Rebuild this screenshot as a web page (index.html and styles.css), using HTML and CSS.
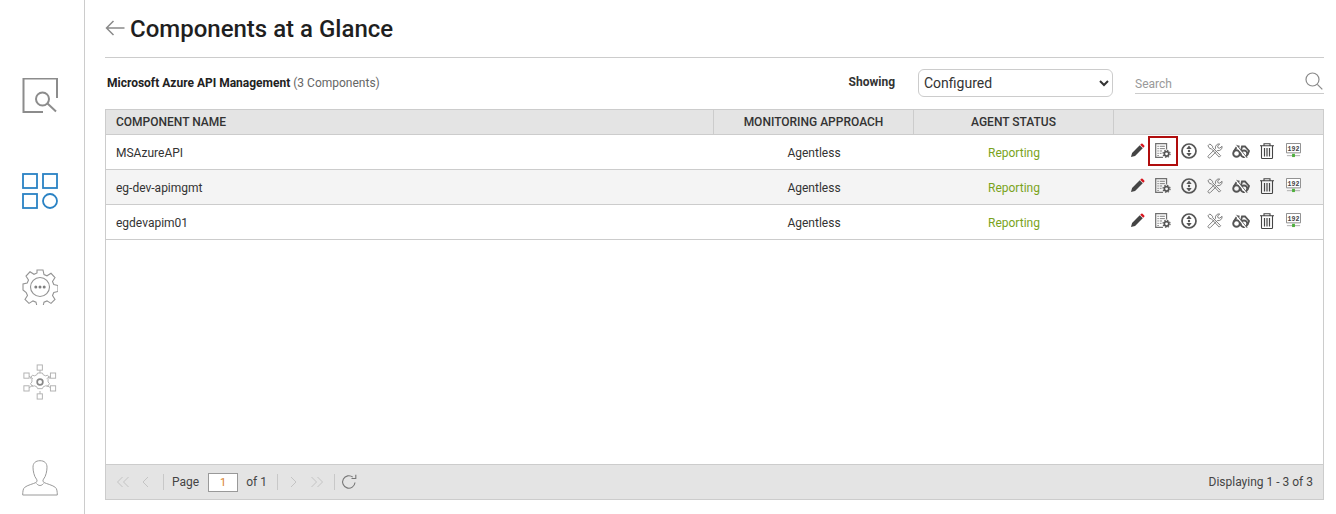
FILE: index.html
```html
<!DOCTYPE html>
<html lang="en">
<head>
<meta charset="utf-8">
<title>Components at a Glance</title>
<link rel="stylesheet" href="styles.css">
</head>
<body>
<svg class="sprite" aria-hidden="true">
  <symbol id="i-edit" viewBox="0 0 16 16">
    <path d="M1 15l1.200-4.400L10.400 2.400l3.200 3.200-8.200 8.200z" fill="#444"/>
    <path d="M10.900 1.900l1.100-1.100a1 1 0 0 1 1.400 0l1.800 1.800a1 1 0 0 1 0 1.400l-1.100 1.100z" fill="#d8161f"/>
  </symbol>
  <symbol id="i-config" viewBox="0 0 17 16">
    <path d="M8.500 15.300H.7V.7h11.600v6.300" fill="none" stroke="#707070" stroke-width="1.300"/>
    <path d="M2.500 3.500h1.500M5 3.500h5.500M2.500 6h1.500M5 6h5.500M2.500 8.500h1.500M5 8.500h2.500M2.500 11h1.500M5 11h2M2.500 13.300h1.500" stroke="#777" stroke-width="1"/>
    <circle cx="12.300" cy="11.500" r="2.400" fill="none" stroke="#555" stroke-width="1.800"/>
    <circle cx="12.300" cy="11.500" r="3.800" fill="none" stroke="#555" stroke-width="1.200" stroke-dasharray="1.500 1.500"/>
  </symbol>
  <symbol id="i-approach" viewBox="0 0 16 16">
    <circle cx="8" cy="8" r="7" fill="none" stroke="#555" stroke-width="1.700"/>
    <path d="M8 2.500L5.300 6h5.400zM8 13.500L5.300 10h5.400z" fill="#555"/>
    <circle cx="8" cy="8" r="1.200" fill="#555"/>
  </symbol>
  <symbol id="i-tools" viewBox="0 0 17 17">
    <path d="M1 3l2-2 3 2.500v1.500l8.500 8.500-1.500 1.500L4.500 6H3z" fill="none" stroke="#777" stroke-width="1"/>
    <path d="M16 3.500l-2.500 2-1.800-.4-.4-1.800L13.500 1a4 4 0 0 0-4.500 5L1.500 13.500a1.400 1.400 0 0 0 2 2L11 8a4 4 0 0 0 5-4.500z" fill="none" stroke="#777" stroke-width="1"/>
  </symbol>
  <symbol id="i-binoculars" viewBox="0 0 18 14">
    <circle cx="4.500" cy="9.500" r="3.300" fill="none" stroke="#555" stroke-width="1.900"/>
    <circle cx="12" cy="9.800" r="3.300" fill="none" stroke="#555" stroke-width="1.900"/>
    <path d="M1.500 8L5 2.500h2.500M9 7l1-4.500h3l4 4.500-1.500 4" fill="none" stroke="#555" stroke-width="1.800"/>
    <path d="M3 .3l11 13.400" stroke="#fff" stroke-width="1.400"/>
    <path d="M4.500.8l11 13.400" stroke="#555" stroke-width=".8"/>
  </symbol>
  <symbol id="i-trash" viewBox="0 0 14 16">
    <path d="M0 2.700h14M4 2.500V.7h6v1.800" fill="none" stroke="#444" stroke-width="1.100"/>
    <path d="M1.500 2.700v12a.8.800 0 0 0 .8.800h9.400a.8.800 0 0 0 .8-.8v-12" fill="none" stroke="#444" stroke-width="1.100"/>
    <path d="M4.500 5v8.500M7 5v8.500M9.500 5v8.500" stroke="#444" stroke-width="1.200"/>
  </symbol>
  <symbol id="i-ip" viewBox="0 0 16 16">
    <path d="M.5.500h15v10H.5z" fill="#fff" stroke="#888" stroke-width="1"/>
    <text x="8" y="8.300" text-anchor="middle" class="ip-text">192</text>
    <path d="M1 13.500h14" stroke="#aaa" stroke-width="1"/>
    <path d="M6.500 11.500h3v3.500h-3z" fill="#4caf3a"/>
  </symbol>
</svg>

<div class="app">
  <nav class="rail">
    <div class="rail-item">
      <svg class="rail-icon" viewBox="0 1 36 36"><path d="M35 21V1.500H1.500V35H21" fill="none" stroke="#8c8c8c" stroke-width="2"/><circle cx="20.500" cy="22" r="6.500" fill="none" stroke="#8c8c8c" stroke-width="2"/><path d="M25.500 26.500l8.500 8" stroke="#8c8c8c" stroke-width="2"/></svg>
    </div>
    <div class="rail-item">
      <svg class="rail-icon" viewBox="0 0 36 36"><g fill="none" stroke="#2a82c4" stroke-width="1.800"><rect x="1" y="1" width="14" height="14"/><rect x="21" y="1" width="14" height="14"/><rect x="1" y="21" width="14" height="14"/><circle cx="28" cy="28" r="7"/></g></svg>
    </div>
    <div class="rail-item">
      <svg class="rail-icon" viewBox="0 0 36 36"><path d="M15 1h6l1 4.500 3 1.300 4-2.500 4 4.300-2.500 3.900 1.300 3 4.200 1v6l-4.200 1-1.300 3 2.500 3.900-4 4-4-2.500-3 1.300-1 4.300h-6l-1-4.300-3-1.300-4 2.500-4-4 2.500-3.900-1.300-3L1 21v-6l4.200-1 1.300-3L4 7.100l4-4.300 4 2.500 3-1.300z" fill="none" stroke="#949494" stroke-width="1.100"/><circle cx="18" cy="18" r="9.500" fill="none" stroke="#949494" stroke-width="1.100"/><circle cx="13.800" cy="18" r="1.500" fill="#808080"/><circle cx="18" cy="18" r="1.500" fill="#808080"/><circle cx="22.200" cy="18" r="1.500" fill="#808080"/></svg>
    </div>
    <div class="rail-item">
      <svg class="rail-icon" viewBox="0 0 36 38"><g fill="none" stroke="#b0b0b0" stroke-width="1"><rect x="15" y="1" width="5.500" height="5.500"/><rect x="15" y="31.500" width="5.500" height="5.500"/><rect x="1" y="9.500" width="5.500" height="5.500"/><rect x="29" y="9.500" width="5.500" height="5.500"/><rect x="1" y="23" width="5.500" height="5.500"/><rect x="29" y="23" width="5.500" height="5.500"/><path d="M18 6.500v3M18 28.500v3M6.500 13l4 2.500M29 13l-4 2.500M6.500 25l4-2.500M29 25l-4-2.500"/><path d="M15.500 9.500h5l1 2 2.500 1 2-.7 2 3-1.500 1.700v2.500l1.500 1.700-2 3-2-.7-2.500 1-1 2h-5l-1-2-2.500-1-2 .7-2-3 1.500-1.700V16.500L8 14.800l2-3 2 .7 2.500-1z"/></g><circle cx="18" cy="19" r="3" fill="none" stroke="#888" stroke-width="1.800"/></svg>
    </div>
    <div class="rail-item">
      <svg class="rail-icon" viewBox="0 0 36 36"><path d="M18 .7c-4.500 0-7 2.500-7 6.500 0 3.500 1 9 3.500 12 .8 1 .8 2.500-.5 3.300-3 1.500-8.500 2.500-11.500 5C1.300 28.500.7 31 .7 35h34.600c0-4-.6-6.500-1.800-7.500-3-2.500-8.500-3.500-11.500-5-1.300-.8-1.300-2.300-.5-3.300 2.500-3 3.500-8.500 3.500-12 0-4-2.500-6.500-7-6.500z" fill="none" stroke="#9a9a9a" stroke-width="1"/><path d="M14.500 23.500c1 1.300 2.300 2 3.500 2s2.500-.7 3.500-2" fill="none" stroke="#9a9a9a" stroke-width="1"/></svg>
    </div>
  </nav>

  <main class="content">
    <header class="page-head">
      <svg class="back" viewBox="0 0 20 16"><path d="M19.500 8H1.500M8.500 1L1.500 8l7 7" fill="none" stroke="#8a8a8a" stroke-width="1.500"/></svg>
      <h1 class="title">Components at a Glance</h1>
    </header>

    <div class="toolbar">
      <div class="summary"><strong>Microsoft Azure API Management</strong> <span class="count">(3 Components)</span></div>
      <label class="showing" for="showing">Showing</label>
      <select class="select" id="showing"><option>Configured</option></select>
      <div class="search">
        <input class="search-input" type="text" placeholder="Search">
        <svg class="search-icon" viewBox="0 0 18 18"><circle cx="7.500" cy="7.500" r="6.500" fill="none" stroke="#8a8a8a" stroke-width="1.200"/><path d="M12.300 12.300l5 5" stroke="#8a8a8a" stroke-width="1.200"/></svg>
      </div>
    </div>

    <section class="grid">
      <div class="row head">
        <div class="cell name">COMPONENT NAME</div>
        <div class="cell center">MONITORING APPROACH</div>
        <div class="cell center">AGENT STATUS</div>
        <div class="cell"></div>
      </div>

      <div class="rows">
        <div class="row item">
          <div class="cell name">MSAzureAPI</div>
          <div class="cell center">Agentless</div>
          <div class="cell center ok">Reporting</div>
          <div class="cell actions">
            <svg class="ic ic-edit"><use href="#i-edit"/></svg>
            <span class="ic-box selected"><svg class="ic ic-config"><use href="#i-config"/></svg></span>
            <svg class="ic"><use href="#i-approach"/></svg>
            <svg class="ic"><use href="#i-tools"/></svg>
            <svg class="ic ic-wide"><use href="#i-binoculars"/></svg>
            <svg class="ic ic-trash"><use href="#i-trash"/></svg>
            <svg class="ic ic-ip"><use href="#i-ip"/></svg>
          </div>
        </div>
        <div class="row item alt">
          <div class="cell name">eg-dev-apimgmt</div>
          <div class="cell center">Agentless</div>
          <div class="cell center ok">Reporting</div>
          <div class="cell actions">
            <svg class="ic ic-edit"><use href="#i-edit"/></svg>
            <span class="ic-box"><svg class="ic ic-config"><use href="#i-config"/></svg></span>
            <svg class="ic"><use href="#i-approach"/></svg>
            <svg class="ic"><use href="#i-tools"/></svg>
            <svg class="ic ic-wide"><use href="#i-binoculars"/></svg>
            <svg class="ic ic-trash"><use href="#i-trash"/></svg>
            <svg class="ic ic-ip"><use href="#i-ip"/></svg>
          </div>
        </div>
        <div class="row item">
          <div class="cell name">egdevapim01</div>
          <div class="cell center">Agentless</div>
          <div class="cell center ok">Reporting</div>
          <div class="cell actions">
            <svg class="ic ic-edit"><use href="#i-edit"/></svg>
            <span class="ic-box"><svg class="ic ic-config"><use href="#i-config"/></svg></span>
            <svg class="ic"><use href="#i-approach"/></svg>
            <svg class="ic"><use href="#i-tools"/></svg>
            <svg class="ic ic-wide"><use href="#i-binoculars"/></svg>
            <svg class="ic ic-trash"><use href="#i-trash"/></svg>
            <svg class="ic ic-ip"><use href="#i-ip"/></svg>
          </div>
        </div>
      </div>

      <footer class="pager">
        <svg class="pg" viewBox="0 0 14 14"><path d="M6.500 2L1.500 7l5 5M12.500 2l-5 5 5 5" class="pg-line"/></svg>
        <svg class="pg pg-prev" viewBox="0 0 14 14"><path d="M9 2L4 7l5 5" class="pg-line"/></svg>
        <span class="sep"></span>
        <span>Page</span>
        <span class="page-box">1</span>
        <span>of 1</span>
        <span class="sep"></span>
        <svg class="pg" viewBox="0 0 14 14"><path d="M5 2l5 5-5 5" class="pg-line"/></svg>
        <svg class="pg pg-last" viewBox="0 0 14 14"><path d="M1.500 2l5 5-5 5M7.500 2l5 5-5 5" class="pg-line"/></svg>
        <span class="sep sep-end"></span>
        <svg class="refresh" viewBox="0 0 16 16"><path d="M14 8.500A6.200 6.200 0 1 1 11.800 3.200" fill="none" stroke="#777" stroke-width="1.100"/><path d="M10.500 4.500h4.300V.8" fill="none" stroke="#777" stroke-width="1.100"/></svg>
        <span class="display">Displaying 1 - 3 of 3</span>
      </footer>
    </section>
  </main>
</div>
</body>
</html>
```

FILE: styles.css
```css
*, *::after { box-sizing: border-box; }
html, body { margin: 0; padding: 0; background: #fff; }
body { font-family: Roboto, "Liberation Sans", sans-serif; font-size: 12px; color: #333; }
.sprite { display: none; }
.ip-text { font: 700 7px "Liberation Mono", monospace; fill: #444; }

.app { display: flex; height: 514px; overflow: hidden; }

.rail { width: 85px; flex: none; border-right: 1px solid #ccc; padding-top: 48px; display: flex; flex-direction: column; }
.rail-item { height: 95.500px; display: flex; align-items: center; justify-content: center; padding-right: 5px; flex: none; }
.rail-icon { width: 36px; height: 36px; display: block; }

.content { flex: 1; min-width: 0; padding: 0 12px 14px 20px; display: flex; flex-direction: column; }

.page-head { height: 58px; flex: none; border-bottom: 1px solid #ccc; display: flex; align-items: center; padding-top: 1px; }
.back { width: 20px; height: 16px; margin: 0 5px 2px 0; flex: none; }
.title { margin: 0; font-size: 24px; font-weight: 500; color: #1f1f1f; line-height: 30px; }

.toolbar { height: 51px; flex: none; display: flex; align-items: center; padding: 0 0 2px 2px; }
.summary { flex: 1; font-size: 12px; color: #222; }
.summary strong { font-weight: 700; }
.count { color: #666; }
.showing { font-weight: 700; color: #333; margin: 0 23px 2px 0; }
.select { width: 195px; height: 28px; border: 1px solid #ccc; border-radius: 6px; background: #fff; padding: 0 1px; font: 14px Roboto, sans-serif; color: #333; margin-right: 22px; }
.search { width: 189px; height: 22px; border-bottom: 1px solid #ccc; display: flex; align-items: center; justify-content: space-between; padding-right: 1px; }
.search-input { border: 0; outline: 0; padding: 0; flex: 1; min-width: 0; height: 18px; margin-top: 4px; font: 12px Roboto, sans-serif; background: transparent; }
.search-input::placeholder { color: #999; }
.search-icon { width: 18px; height: 18px; margin-top: -3px; flex: none; }

.grid { flex: 1; min-height: 0; border: 1px solid #ccc; display: flex; flex-direction: column; }
.row { display: grid; grid-template-columns: 608px 200px 200px 1fr; }
.head { height: 25px; flex: none; background: #e4e4e4; border-bottom: 1px solid #ccc; font-weight: 500; color: #333; }
.head .cell { border-right: 1px solid #ccc; }
.head .cell:last-child { border-right: 0; }
.cell { display: flex; align-items: center; min-width: 0; }
.name { padding-left: 10px; }
.center { justify-content: center; }
.rows { flex: 1; min-height: 0; }
.item { height: 35px; border-bottom: 1px solid #ccc; color: #333; }
.item .name, .item .center { padding-top: 2px; }
.alt { background: #f4f4f4; }
.ok { color: #7aa31c; }

.actions { display: grid; grid-auto-flow: column; grid-auto-columns: 26px; justify-content: start; justify-items: center; align-items: center; padding: 0 0 3px 10px; }
.ic { width: 16px; height: 16px; display: block; }
.ic-edit { width: 15px; height: 15px; }
.ic-wide { width: 18px; height: 14px; }
.ic-trash { width: 14px; height: 16px; }
.ic-ip { width: 15px; height: 15px; }
.ic-box { width: 16px; height: 15px; display: block; position: relative; }
.ic-config { width: 16px; height: 15px; }
.selected::after { content: ""; position: absolute; left: -7px; top: -7px; width: 30px; height: 30px; border: 2px solid #b00d0d; }

.pager { height: 35px; flex: none; background: #e4e4e4; border-top: 1px solid #ccc; display: flex; align-items: center; padding: 0 10px; color: #444; }
.pg { width: 14px; height: 14px; flex: none; }
.pg-prev { margin-left: 9px; }
.pg-last { margin-left: 10px; }
.pg-line { fill: none; stroke: #c4c4c4; stroke-width: 1; }
.sep { width: 1px; height: 16px; background: #c8c8c8; margin: 0 8px 0 10px; flex: none; }
.sep-end { margin-right: 6px; }
.page-box { width: 30px; height: 19px; margin: 0 8px 0 9px; border: 1px solid #999; background: #fff; color: #d9822b; font-size: 11px; display: flex; align-items: center; justify-content: center; }
.refresh { width: 16px; height: 16px; flex: none; }
.display { margin-left: auto; color: #444; }
```
